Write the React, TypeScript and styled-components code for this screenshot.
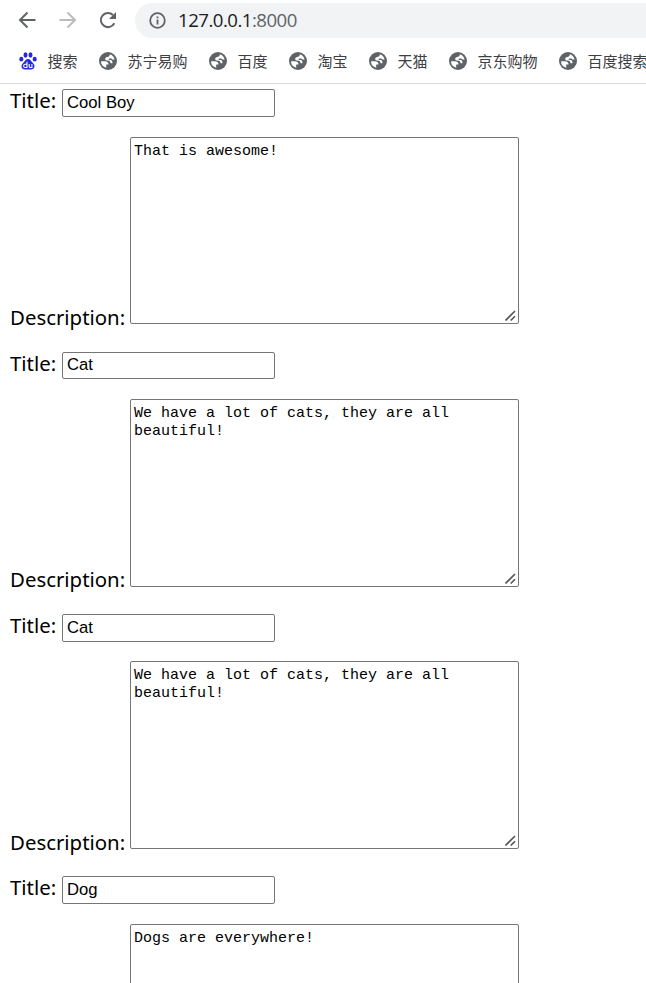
import React from "react";
import styled, { createGlobalStyle } from "styled-components";

const GlobalStyle = createGlobalStyle`
  html, body { margin: 0; background: #fff; overflow: hidden; }
  * { box-sizing: border-box; }
`;

const Browser = styled.div`
  width: 646px;
  height: 983px;
  overflow: hidden;
  display: flex;
  flex-direction: column;
`;

const Toolbar = styled.header`
  flex: none;
  height: 41px;
  padding: 3px 0 3px 18px;
  display: flex;
  align-items: flex-start;
`;

const NavButton = styled.span<{ $dim?: boolean }>`
  flex: none;
  width: 40px;
  height: 34px;
  display: flex;
  align-items: center;
  color: ${(p) => (p.$dim ? "#babcbe" : "#5f6368")};
  svg { display: block; }
`;

const AddressBar = styled.div`
  flex: none;
  width: 560px;
  height: 35px;
  margin-left: -3px;
  padding-left: 14px;
  border-radius: 18px;
  background: #f1f3f4;
  display: flex;
  align-items: center;
  gap: 12px;
  color: #5f6368;
  font: 18.6px/32px "Open Sans", "Noto Sans", sans-serif;
  letter-spacing: -0.5px;
`;

const Url = styled.span`
  height: 34px;
`;

const Host = styled.span`
  color: #202124;
`;

const Bookmarks = styled.nav`
  flex: none;
  height: 43px;
  padding: 0 0 3px 19px;
  border-bottom: 1px solid #dadce0;
  display: flex;
  align-items: center;
  gap: 21px;
`;

const Bookmark = styled.span`
  flex: none;
  display: flex;
  align-items: center;
  gap: 10.5px;
  margin-right: 0.5px;
  color: #3c4043;
  font: 15px/20px "Noto Sans CJK SC", sans-serif;
  white-space: nowrap;
  svg { display: block; }
`;

const Page = styled.main`
  flex: 1;
  min-height: 0;
  overflow: hidden;
  padding: 5.2px 0 0 10px;
`;

const Entry = styled.section`
  height: 262.4px;
`;

const TitleRow = styled.label`
  display: flex;
  height: 28px;
`;

const DescriptionRow = styled.label`
  display: flex;
  align-items: flex-end;
  margin-top: 19.4px;
  height: 187.6px;
`;

const LabelText = styled.span<{ $width: number; $height: number }>`
  flex: none;
  width: ${(p) => p.$width}px;
  height: ${(p) => p.$height}px;
  color: #000;
  font: 20.4px/22px "Noto Sans", sans-serif;
  white-space: nowrap;
`;

const TitleInput = styled.input`
  width: 213px;
  height: 27.6px;
  padding: 1px 4px;
  border: 1px solid #767676;
  border-radius: 2px;
  background: #fff;
  color: #000;
  outline: none;
  font: 16.67px "Liberation Sans", Arial, sans-serif;
`;

const DescriptionField = styled.span`
  position: relative;
  display: flex;
`;

const DescriptionInput = styled.textarea`
  width: 389px;
  height: 187.6px;
  margin: 0;
  padding: 4.95px 3px;
  border: 1px solid #767676;
  border-radius: 2px;
  background: #fff;
  color: #000;
  outline: none;
  resize: none;
  font: 15px/18px "Liberation Mono", monospace;
`;

const Grip = styled.svg`
  position: absolute;
  right: 3px;
  bottom: 3px;
  pointer-events: none;
`;

const ArrowIcon = ({ flip }: { flip?: boolean }) => (
  <svg width="19" height="18" viewBox="0 0 19 18" fill="none" stroke="currentColor" strokeWidth="2">
    <path d={flip ? "M1.5 9H17M9.5 1.5 17 9l-7.5 7.5" : "M17.5 9H2M9.5 1.5 2 9l7.5 7.5"} />
  </svg>
);

const ReloadIcon = () => (
  <svg width="20" height="20" viewBox="0 0 20 20">
    <path d="M16.3 13.2A7.1 7.1 0 1 1 15 5" fill="none" stroke="currentColor" strokeWidth="2" />
    <path d="M18 2v7h-7z" fill="currentColor" />
  </svg>
);

const InfoIcon = () => (
  <svg width="17" height="17" viewBox="0 0 17 17">
    <circle cx="8.5" cy="8.5" r="7.3" fill="none" stroke="currentColor" strokeWidth="1.8" />
    <path d="M7.6 7.5h1.8v5H7.6zM7.6 4.4h1.8v1.8H7.6z" fill="currentColor" />
  </svg>
);

const GlobeIcon = () => (
  <svg width="18" height="18" viewBox="0 0 18 18">
    <circle cx="9" cy="9" r="9" fill="#5f6368" />
    <path
      d="M2 9.200H5.800C8.300 9.200 9.600 10.600 9.600 12.600H7.200V15.700A6.900 6.900 0 0 1 2 9.200z"
      fill="#fff"
    />
    <path
      d="M10.800 2.300C10.800 4.200 9.800 4.800 8.300 5C6.800 5.200 6.200 6 6.200 6.900C6.200 8.200 7.300 8.400 8.800 8.400C10.700 8.400 11.400 9.600 11.600 11.200H13.400C13.800 9.400 12.800 8.100 11.600 7.900H9.800V6.600H12.500L13.200 7.600H15.600A6.900 6.900 0 0 0 10.800 2.300z"
      fill="#fff"
    />
  </svg>
);

const PawIcon = () => (
  <svg width="18" height="18" viewBox="0 0 18 18" fill="#2529d8">
    <ellipse cx="6.500" cy="3" rx="2" ry="2.700" />
    <ellipse cx="11.500" cy="3" rx="2" ry="2.700" />
    <ellipse cx="2.300" cy="7.200" rx="2" ry="2.400" />
    <ellipse cx="15.700" cy="7.200" rx="2" ry="2.400" />
    <path d="M9 7c2 0 2.700 1.800 4.500 3.600 3.400 3 2 7-1.200 7H5.700c-3.200 0-4.600-4-1.200-7C6.300 8.800 7 7 9 7z" />
    <path d="M8 9.800v5.700H6c-1.800 0-1.800-3.200 0-3.200h2M10.200 12v2.500q0 1 1 1h1.700V12" fill="none" stroke="#fff" strokeWidth="1.1" />
  </svg>
);

const bookmarks = ["搜索", "苏宁易购", "百度", "淘宝", "天猫", "京东购物", "百度搜索"];

const entries = [
  { title: "Cool Boy", description: "That is awesome!" },
  { title: "Cat", description: "We have a lot of cats, they are all beautiful!" },
  { title: "Cat", description: "We have a lot of cats, they are all beautiful!" },
  { title: "Dog", description: "Dogs are everywhere!" },
];

export default function App() {
  return (
    <Browser>
      <GlobalStyle />
      <Toolbar>
        <NavButton><ArrowIcon /></NavButton>
        <NavButton $dim><ArrowIcon flip /></NavButton>
        <NavButton><ReloadIcon /></NavButton>
        <AddressBar>
          <InfoIcon />
          <Url><Host>127.0.0.1</Host>:8000</Url>
        </AddressBar>
      </Toolbar>
      <Bookmarks>
        {bookmarks.map((name, i) => (
          <Bookmark key={name}>
            {i === 0 ? <PawIcon /> : <GlobeIcon />}
            {name}
          </Bookmark>
        ))}
      </Bookmarks>
      <Page>
        {entries.map((entry, i) => (
          <Entry key={i}>
            <TitleRow>
              <LabelText $width={52} $height={24}>Title:</LabelText>
              <TitleInput defaultValue={entry.title} />
            </TitleRow>
            <DescriptionRow>
              <LabelText $width={120} $height={18.4}>Description:</LabelText>
              <DescriptionField>
                <DescriptionInput spellCheck={false} defaultValue={entry.description} />
                <Grip width="11" height="11" viewBox="0 0 11 11" fill="none" stroke="#555" strokeWidth="1.6">
                  <path d="M.5 10.500 10 1M5.700 10.500 10 6.200" />
                </Grip>
              </DescriptionField>
            </DescriptionRow>
          </Entry>
        ))}
      </Page>
    </Browser>
  );
}
